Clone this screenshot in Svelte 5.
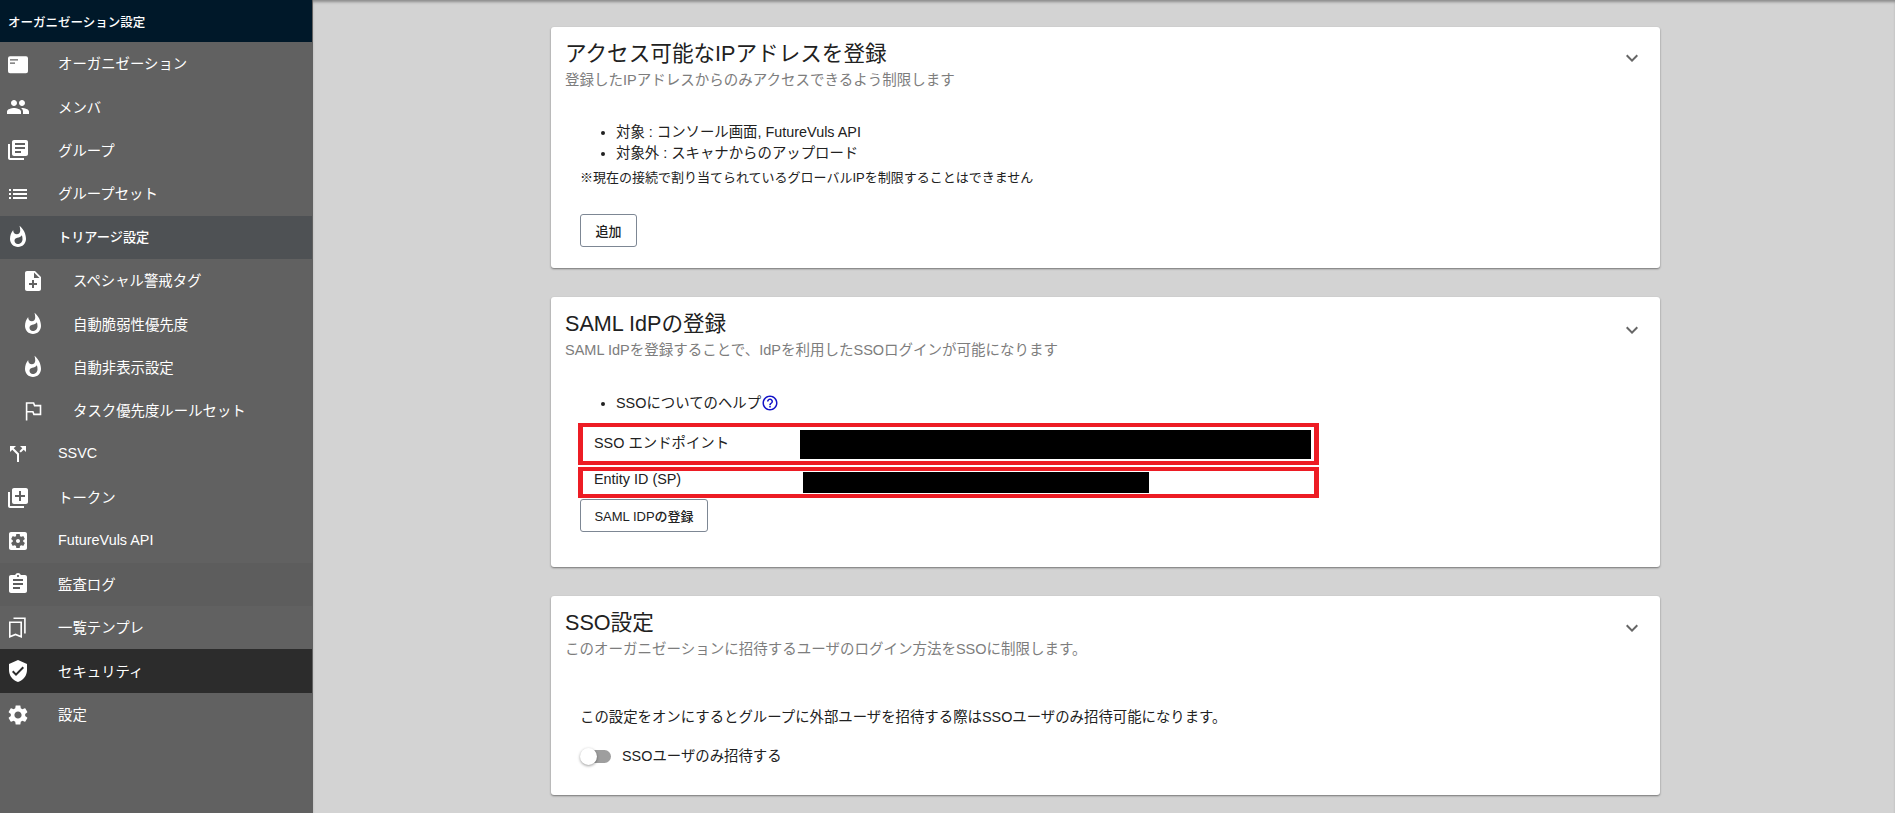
<script>
  // material icon paths
  const icons = {
    org: "M4 4.3h16a2 2 0 0 1 2 2v13a2 2 0 0 1-2 2H4a2 2 0 0 1-2-2v-13a2 2 0 0 1 2-2zm0 3v1.2h8V7.3H4zm0 3.2v1.2h5v-1.2H4z",
    people: "M16 11c1.66 0 2.99-1.34 2.99-3S17.66 5 16 5c-1.66 0-3 1.34-3 3s1.34 3 3 3zm-8 0c1.66 0 2.99-1.34 2.99-3S9.66 5 8 5C6.34 5 5 6.34 5 8s1.34 3 3 3zm0 2c-2.33 0-7 1.17-7 3.5V19h14v-2.5c0-2.33-4.67-3.5-7-3.5zm8 0c-.29 0-.62.02-.97.05 1.16.84 1.97 1.97 1.97 3.45V19h6v-2.5c0-2.33-4.67-3.5-7-3.5z",
    books: "M4 6H2v14c0 1.1.9 2 2 2h14v-2H4V6zm16-4H8c-1.1 0-2 .9-2 2v12c0 1.1.9 2 2 2h12c1.1 0 2-.9 2-2V4c0-1.1-.9-2-2-2zm-1 9H9V9h10v2zm-4 4H9v-2h6v2zm4-8H9V5h10v2z",
    list: "M3 13h2v-2H3v2zm0 4h2v-2H3v2zm0-8h2V7H3v2zm4 4h14v-2H7v2zm0 4h14v-2H7v2zM7 7v2h14V7H7z",
    fire: "M13.5.67s.74 2.65.74 4.8c0 2.06-1.35 3.73-3.41 3.73-2.07 0-3.63-1.67-3.63-3.73l.03-.36C5.21 7.51 4 10.62 4 14c0 4.42 3.58 8 8 8s8-3.58 8-8C20 8.61 17.41 3.8 13.5.67zM11.71 19c-1.78 0-3.22-1.4-3.22-3.14 0-1.62 1.05-2.76 2.81-3.12 1.77-.36 3.6-1.21 4.62-2.58.39 1.29.59 2.65.59 4.04 0 2.65-2.15 4.8-4.8 4.8z",
    note: "M14 2H6c-1.1 0-1.99.9-1.99 2L4 20c0 1.1.89 2 1.99 2H18c1.1 0 2-.9 2-2V8l-6-6zm2 14h-3v3h-2v-3H8v-2h3v-3h2v3h3v2zm-3-7V3.5L18.5 9H13z",
    split: "M14 4l2.29 2.29-2.88 2.88 1.42 1.42 2.88-2.88L20 10V4zm-4 0H4v6l2.29-2.29 4.71 4.7V20h2v-8.41l-5.29-5.3z",
    queue: "M4 6H2v14c0 1.1.9 2 2 2h14v-2H4V6zm16-4H8c-1.1 0-2 .9-2 2v12c0 1.1.9 2 2 2h12c1.1 0 2-.9 2-2V4c0-1.1-.9-2-2-2zm-1 9h-4v4h-2v-4H9V9h4V5h2v4h4v2z",
    api: "M12 10c-1.1 0-2 .9-2 2s.9 2 2 2 2-.9 2-2-.9-2-2-2zm7-7H5c-1.11 0-2 .9-2 2v14c0 1.1.89 2 2 2h14c1.11 0 2-.9 2-2V5c0-1.1-.89-2-2-2zm-1.75 9c0 .23-.02.46-.05.68l1.48 1.16c.13.11.17.3.08.45l-1.4 2.42c-.09.15-.27.21-.43.15l-1.74-.7c-.36.28-.76.51-1.18.69l-.26 1.85c-.03.17-.18.3-.35.3h-2.8c-.17 0-.32-.13-.35-.29l-.26-1.85c-.43-.18-.82-.41-1.18-.69l-1.74.7c-.16.06-.34 0-.43-.15l-1.4-2.42c-.09-.15-.05-.34.08-.45l1.48-1.16c-.03-.23-.05-.46-.05-.69 0-.23.02-.46.05-.68l-1.48-1.16c-.13-.11-.17-.3-.08-.45l1.4-2.42c.09-.15.27-.21.43-.15l1.74.7c.36-.28.76-.51 1.18-.69l.26-1.85c.03-.17.18-.3.35-.3h2.8c.17 0 .32.13.35.29l.26 1.85c.43.18.82.41 1.18.69l1.74-.7c.16-.06.34 0 .43.15l1.4 2.42c.09.15.05.34-.08.45l-1.48 1.16c.03.23.05.46.05.69z",
    clip: "M19 3h-4.18C14.4 1.84 13.3 1 12 1c-1.3 0-2.4.84-2.82 2H5c-1.1 0-2 .9-2 2v14c0 1.1.9 2 2 2h14c1.1 0 2-.9 2-2V5c0-1.1-.9-2-2-2zm-7 0c.55 0 1 .45 1 1s-.45 1-1 1-1-.45-1-1 .45-1 1-1zm2 14H7v-2h7v2zm3-4H7v-2h10v2zm0-4H7V7h10v2z",
    shield: "M12 1L3 5v6c0 5.55 3.84 10.74 9 12 5.16-1.26 9-6.45 9-12V5l-9-4zm-2 16l-4-4 1.41-1.41L10 14.17l6.59-6.59L18 9l-8 8z",
    gear: "M19.14 12.94c.04-.3.06-.61.06-.94 0-.32-.02-.64-.07-.94l2.03-1.58c.18-.14.23-.41.12-.61l-1.92-3.32c-.12-.22-.37-.29-.59-.22l-2.39.96c-.5-.38-1.03-.7-1.62-.94l-.36-2.54c-.04-.24-.24-.41-.48-.41h-3.84c-.24 0-.43.17-.47.41l-.36 2.54c-.59.24-1.13.57-1.62.94l-2.39-.96c-.22-.08-.47 0-.59.22L2.74 8.87c-.12.21-.08.47.12.61l2.03 1.58c-.05.3-.09.63-.09.94s.02.64.07.94l-2.03 1.58c-.18.14-.23.41-.12.61l1.92 3.32c.12.22.37.29.59.22l2.39-.96c.5.38 1.03.7 1.62.94l.36 2.54c.05.24.24.41.48.41h3.84c.24 0 .44-.17.47-.41l.36-2.54c.59-.24 1.13-.56 1.62-.94l2.39.96c.22.08.47 0 .59-.22l1.92-3.32c.12-.22.07-.47-.12-.61l-2.01-1.58zM12 15.6c-1.98 0-3.6-1.62-3.6-3.6s1.62-3.6 3.6-3.6 3.6 1.62 3.6 3.6-1.62 3.6-3.6 3.6z"
  };

  // these two are thin outlines in the original, so they are stroked
  const strokes = {
    flag: "M5.6 21.5V4h7l1 2.6h5.9v8.8h-6.6l-1-2.6H5.6",
    marks: "M3.8 6.2h11.4v14.6l-5.7-2.4-5.7 2.4zM7.5 2.2h11.4v15.2"
  };

  const menu = [
    { label: "オーガニゼーション", icon: "org" },
    { label: "メンバ", icon: "people" },
    { label: "グループ", icon: "books" },
    { label: "グループセット", icon: "list" },
    { label: "トリアージ設定", icon: "fire", kind: "open" },
    { label: "スペシャル警戒タグ", icon: "note", sub: true },
    { label: "自動脆弱性優先度", icon: "fire", sub: true },
    { label: "自動非表示設定", icon: "fire", sub: true },
    { label: "タスク優先度ルールセット", icon: "flag", sub: true },
    { label: "SSVC", icon: "split" },
    { label: "トークン", icon: "queue" },
    { label: "FutureVuls API", icon: "api" },
    { label: "監査ログ", icon: "clip", kind: "dim" },
    { label: "一覧テンプレ", icon: "marks" },
    { label: "セキュリティ", icon: "shield", kind: "active" },
    { label: "設定", icon: "gear" }
  ];
</script>

<div class="page">
  <aside class="sidebar">
    <div class="side-head">オーガニゼーション設定</div>
    {#each menu as item}
      <div class="row {item.kind ?? ''}" class:sub={item.sub}>
        <svg class="ic" viewBox="0 0 24 24">
          {#if strokes[item.icon]}
            <path d={strokes[item.icon]} fill="none" stroke="#fff" stroke-width="1.6" />
          {:else}
            <path d={icons[item.icon]} fill="#fff" fill-rule="evenodd" />
          {/if}
        </svg>
        <span class="row-text">{item.label}</span>
      </div>
    {/each}
  </aside>

  <main class="main">
    <section class="card one">
      <div class="head">
        <div>
          <h2>アクセス可能なIPアドレスを登録</h2>
          <p class="subtitle">登録したIPアドレスからのみアクセスできるよう制限します</p>
        </div>
        <svg class="chev" viewBox="0 0 24 24"><path d="M7.41 8.59 12 13.17l4.59-4.58L18 10l-6 6-6-6z" /></svg>
      </div>
      <div class="body">
        <ul>
          <li>対象 : コンソール画面, FutureVuls API</li>
          <li>対象外 : スキャナからのアップロード</li>
        </ul>
        <p class="note">※現在の接続で割り当てられているグローバルIPを制限することはできません</p>
        <button class="add">追加</button>
      </div>
    </section>

    <section class="card two">
      <div class="head">
        <div>
          <h2>SAML IdPの登録</h2>
          <p class="subtitle">SAML IdPを登録することで、IdPを利用したSSOログインが可能になります</p>
        </div>
        <svg class="chev" viewBox="0 0 24 24"><path d="M7.41 8.59 12 13.17l4.59-4.58L18 10l-6 6-6-6z" /></svg>
      </div>
      <div class="body">
        <ul>
          <li>SSOについてのヘルプ<svg class="help" viewBox="0 0 24 24"><path d="M11 18h2v-2h-2v2zm1-16C6.48 2 2 6.48 2 12s4.48 10 10 10 10-4.48 10-10S17.52 2 12 2zm0 18c-4.41 0-8-3.59-8-8s3.59-8 8-8 8 3.59 8 8-3.59 8-8 8zm0-14c-2.21 0-4 1.79-4 4h2c0-1.1.9-2 2-2s2 .9 2 2c0 2-3 1.75-3 5h2c0-2.25 3-2.5 3-5 0-2.21-1.79-4-4-4z" /></svg></li>
        </ul>
        <div class="redbox first">
          <div class="label">SSO エンドポイント</div>
          <div class="mask"></div>
        </div>
        <div class="redbox second">
          <div class="label">Entity ID (SP)</div>
          <div class="mask"></div>
        </div>
        <button class="saml">SAML IDPの登録</button>
      </div>
    </section>

    <section class="card three">
      <div class="head">
        <div>
          <h2>SSO設定</h2>
          <p class="subtitle">このオーガニゼーションに招待するユーザのログイン方法をSSOに制限します。</p>
        </div>
        <svg class="chev" viewBox="0 0 24 24"><path d="M7.41 8.59 12 13.17l4.59-4.58L18 10l-6 6-6-6z" /></svg>
      </div>
      <div class="body">
        <p class="desc">この設定をオンにするとグループに外部ユーザを招待する際はSSOユーザのみ招待可能になります。</p>
        <div class="switch-row">
          <span class="track"><span class="thumb"></span></span>
          <span>SSOユーザのみ招待する</span>
        </div>
      </div>
    </section>
  </main>
</div>

<style>
  :global(body) {
    margin: 0;
    background: #d3d3d3;
  }

  .page {
    display: flex;
    height: 813px;
    overflow: hidden;
    font-family: "Liberation Sans", "Noto Sans CJK JP", sans-serif;
    color: #212121;
  }

  .sidebar {
    width: 313px;
    flex: none;
    background: #616161;
    color: #fff;
  }

  .side-head {
    height: 42px;
    display: flex;
    align-items: center;
    padding-left: 8px;
    margin-right: 1px;
    box-sizing: border-box;
    background: #001829;
    font-size: 12.5px;
    font-weight: 500;
  }

  .row {
    height: 43.4px;
    display: flex;
    align-items: center;
    font-size: 14.4px;
    padding-left: 6px;
    margin-right: 1px;
    box-sizing: border-box;
  }

  .row.sub {
    padding-left: 21px;
  }

  .row-text {
    margin-bottom: 2px;
  }

  .ic {
    width: 24px;
    height: 24px;
    flex: none;
    margin-right: 28px;
  }

  .row.open {
    background: #4e5154;
    font-size: 13.2px;
    font-weight: 500;
  }

  .row.dim {
    background: #5d5d5d;
  }

  .row.active {
    background: #2c2c2c;
  }

  .main {
    flex: 1;
    display: flex;
    flex-direction: column;
    align-items: center;
    gap: 29px;
    padding: 27px 0 0 3px;
    box-shadow: inset 0 3px 3px -1px rgba(0, 0, 0, 0.35);
  }

  .card {
    width: 1109px;
    flex: none;
    background: #fff;
    border-radius: 3px;
    box-sizing: border-box;
    padding: 0 14px;
    box-shadow: 0 1px 2px rgba(0, 0, 0, 0.45);
  }

  .one {
    height: 241px;
  }
  .two {
    height: 270px;
  }
  .three {
    height: 199px;
  }

  .head {
    display: flex;
    justify-content: space-between;
    padding-top: 13px;
  }

  h2 {
    margin: 0;
    font-size: 21.6px;
    font-weight: 400;
    line-height: 28px;
  }

  .subtitle {
    margin: 0;
    font-size: 14.5px;
    line-height: 24px;
    color: #7d7d7d;
  }

  .chev {
    width: 24px;
    height: 24px;
    fill: #666;
    margin: 6px 2px 0 0;
  }

  .two .chev {
    margin-top: 8px;
  }

  .three .chev {
    margin-top: 7px;
  }

  .body {
    padding-left: 15px;
    font-size: 14.4px;
  }

  ul {
    margin: 0;
    padding-left: 36px;
    line-height: 21px;
  }

  .one .body {
    padding-top: 30px;
  }

  .note {
    margin: 3px 0 0;
    font-size: 13px;
    line-height: 21px;
  }

  button {
    display: block;
    background: #fff;
    border: 1px solid #7d8794;
    border-radius: 3px;
    font: inherit;
    font-size: 13px;
    font-weight: 500;
    color: #212121;
    box-sizing: border-box;
  }

  .add {
    width: 57px;
    height: 33px;
    margin-top: 26px;
    padding: 0;
  }

  .two .body {
    padding-top: 31px;
  }

  .help {
    width: 18px;
    height: 18px;
    fill: #1414c8;
    vertical-align: -4px;
    margin-left: 0;
  }

  .redbox {
    margin-left: -2px;
    width: 741px;
    box-sizing: border-box;
    border-style: solid;
    border-color: #ed1c24;
    border-width: 4px 5px;
    display: flex;
    background: #fff;
  }

  .redbox.first {
    height: 42px;
    margin-top: 9px;
    padding: 3px 3px 2px 0;
  }

  .redbox.second {
    height: 31px;
    margin-top: 2px;
    padding: 1px 0 1px;
  }

  .label {
    flex: none;
    font-size: 14.4px;
    padding-left: 11px;
    box-sizing: border-box;
  }

  .first .label {
    width: 217px;
    line-height: 26px;
  }

  .second .label {
    width: 220px;
    line-height: 14px;
  }

  .mask {
    background: #000;
  }

  .first .mask {
    flex: 1;
  }

  .second .mask {
    width: 346px;
  }

  .saml {
    width: 128px;
    height: 33px;
    margin-top: 1px;
    padding: 0;
  }

  .three .body {
    padding-top: 44px;
  }

  .desc {
    margin: 0;
    font-size: 14.4px;
    line-height: 24px;
  }

  .switch-row {
    display: flex;
    align-items: center;
    gap: 11px;
    margin-top: 15px;
    font-size: 14.4px;
    line-height: 24px;
  }

  .track {
    position: relative;
    display: block;
    width: 30px;
    height: 13px;
    margin-left: 1px;
    border-radius: 7px;
    background: #9e9e9e;
  }

  .thumb {
    position: absolute;
    left: -1px;
    top: -2px;
    width: 17px;
    height: 17px;
    border-radius: 50%;
    background: #fff;
    box-shadow: 0 1px 3px rgba(0, 0, 0, 0.4);
  }
</style>
